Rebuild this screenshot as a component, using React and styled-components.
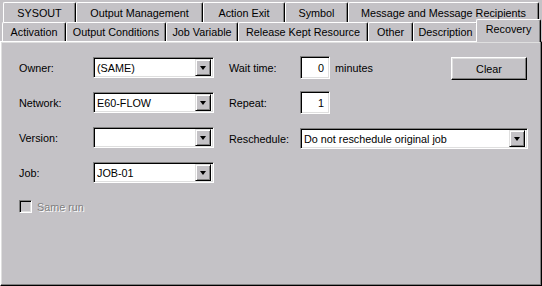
import React from 'react'
import styled, { createGlobalStyle } from 'styled-components'

const Global = createGlobalStyle`
  body {
    margin: 0;
    background: #c4c2c6;
  }
  #root {
    width: 542px;
    height: 286px;
  }
`

const Window = styled.div`
  width: 542px;
  height: 286px;
  background: #c4c2c6;
  font-family: "Liberation Sans", Arial, sans-serif;
  font-size: 10.8px;
  color: #000;
  display: flex;
  flex-direction: column;
  overflow: hidden;
`

const TabStrip = styled.div`
  height: 41px;
  display: flex;
  flex-direction: column;
  position: relative;
  z-index: 2;
`

const TabRow = styled.div`
  display: flex;
  align-items: flex-end;
  height: ${props => props.$height}px;
  margin-top: ${props => props.$top || 0}px;
  padding-left: ${props => props.$left}px;
`

const Tab = styled.div`
  box-sizing: border-box;
  width: ${props => props.$w}px;
  height: ${props => props.$selected ? 23 : props.$h}px;
  margin-left: ${props => props.$selected ? -2 : 0}px;
  margin-bottom: ${props => props.$selected ? -1 : 0}px;
  background: #c4c2c6;
  border-top: 1px solid #fff;
  border-left: 1px solid #fff;
  border-right: 1px solid #000;
  border-top-left-radius: 2px;
  border-top-right-radius: 2px;
  box-shadow: inset -1px 0 #808080;
  display: flex;
  align-items: ${props => props.$selected ? 'flex-start' : 'center'};
  padding-top: ${props => props.$selected ? 3 : 0}px;
  justify-content: center;
  white-space: nowrap;
  position: relative;
  z-index: ${props => props.$selected ? 3 : 1};
`

const Panel = styled.div`
  box-sizing: border-box;
  flex: 1;
  border-top: 1px solid #fff;
  border-left: 1px solid #fff;
  border-right: 1px solid #000;
  border-bottom: 1px solid #000;
  box-shadow: inset -1px -1px #808080, inset 1px 1px #dfdfdf;
  display: flex;
  padding-left: 18px;
`

const LeftCol = styled.div`
  display: grid;
  grid-template-columns: 74px 121px;
  row-gap: 14px;
  align-items: center;
  align-content: start;
  margin-top: 15px;
`

const RightCol = styled.div`
  width: 299px;
  margin-left: 15px;
  margin-top: 13px;
  display: flex;
  flex-direction: column;
`

const Row = styled.div`
  display: flex;
  align-items: center;
  margin-top: ${props => props.$top || 0}px;
`

const Label = styled.div`
  width: ${props => props.$w ? props.$w + 'px' : 'auto'};
  flex-shrink: 0;
  white-space: nowrap;
`

const Sunken = styled.div`
  box-sizing: border-box;
  background: #fff;
  border: 1px solid;
  border-color: #808080 #fff #fff #808080;
  box-shadow: inset 1px 1px #000, inset -1px -1px #dfdfdf;
`

const ComboBox = styled(Sunken)`
  width: ${props => props.$w}px;
  height: 21px;
  display: flex;
  align-items: center;
  padding: 2px 2px 2px 3px;
`

const ComboText = styled.div`
  flex: 1;
  white-space: nowrap;
  overflow: hidden;
`

const DropButton = styled.div`
  box-sizing: border-box;
  width: 16px;
  height: 17px;
  background: #c4c2c6;
  border: 1px solid;
  border-color: #dfdfdf #000 #000 #dfdfdf;
  box-shadow: inset 1px 1px #fff, inset -1px -1px #808080;
  display: flex;
  align-items: center;
  justify-content: center;
  &::after {
    content: '';
    width: 0;
    height: 0;
    border-left: 3.5px solid transparent;
    border-right: 3.5px solid transparent;
    border-top: 4px solid #000;
    margin-top: 1px;
  }
`

const NumInput = styled(Sunken)`
  width: 30px;
  height: 23px;
  display: flex;
  align-items: center;
  justify-content: flex-end;
  padding-right: 5px;
`

const Unit = styled.div`
  margin-left: 5px;
`

const Button = styled.div`
  box-sizing: border-box;
  width: 76px;
  height: 23px;
  margin-left: auto;
  margin-right: 1px;
  align-self: flex-start;
  margin-top: 2px;
  border: 1px solid;
  border-color: #fff #000 #000 #fff;
  box-shadow: inset -1px -1px #808080, inset 1px 1px #dfdfdf;
  display: flex;
  align-items: center;
  justify-content: center;
`

const CheckRow = styled.div`
  grid-column: 1 / 3;
  display: flex;
  align-items: center;
  margin-top: 3px;
`

const CheckBox = styled(Sunken)`
  width: 13px;
  height: 13px;
  background: #c4c2c6;
`

const Disabled = styled.div`
  margin-left: 5px;
  color: #808080;
  text-shadow: 1px 1px 0 #fff;
`

const row1 = [
  ['SYSOUT', 73],
  ['Output Management', 127],
  ['Action Exit', 82],
  ['Symbol', 63],
  ['Message and Message Recipients', 191],
]

const row2 = [
  ['Activation', 64],
  ['Output Conditions', 100],
  ['Job Variable', 72],
  ['Release Kept Resource', 130],
  ['Other', 45],
  ['Description', 65],
  ['Recovery', 65, true],
]

const Combo = ({ w, value }) => (
  <ComboBox $w={w}>
    <ComboText>{value}</ComboText>
    <DropButton />
  </ComboBox>
)

export default function App() {
  return (
    <Window>
      <Global />
      <TabStrip>
        <TabRow $height={20} $top={2} $left={3}>
          {row1.map(([t, w]) => (
            <Tab key={t} $w={w} $h={20}>{t}</Tab>
          ))}
        </TabRow>
        <TabRow $height={19} $left={2}>
          {row2.map(([t, w, sel]) => (
            <Tab key={t} $w={w} $h={19} $selected={sel}>{t}</Tab>
          ))}
        </TabRow>
      </TabStrip>
      <Panel>
        <LeftCol>
          <Label>Owner:</Label>
          <Combo w={121} value="(SAME)" />
          <Label>Network:</Label>
          <Combo w={121} value="E60-FLOW" />
          <Label>Version:</Label>
          <Combo w={121} value="" />
          <Label>Job:</Label>
          <Combo w={121} value="JOB-01" />
          <CheckRow>
            <CheckBox />
            <Disabled>Same run</Disabled>
          </CheckRow>
        </LeftCol>
        <RightCol>
          <Row>
            <Label $w={71}>Wait time:</Label>
            <NumInput>0</NumInput>
            <Unit>minutes</Unit>
            <Button>Clear</Button>
          </Row>
          <Row $top={11}>
            <Label $w={71}>Repeat:</Label>
            <NumInput>1</NumInput>
          </Row>
          <Row $top={14}>
            <Label $w={71}>Reschedule:</Label>
            <Combo w={229} value="Do not reschedule original job" />
          </Row>
        </RightCol>
      </Panel>
    </Window>
  )
}
